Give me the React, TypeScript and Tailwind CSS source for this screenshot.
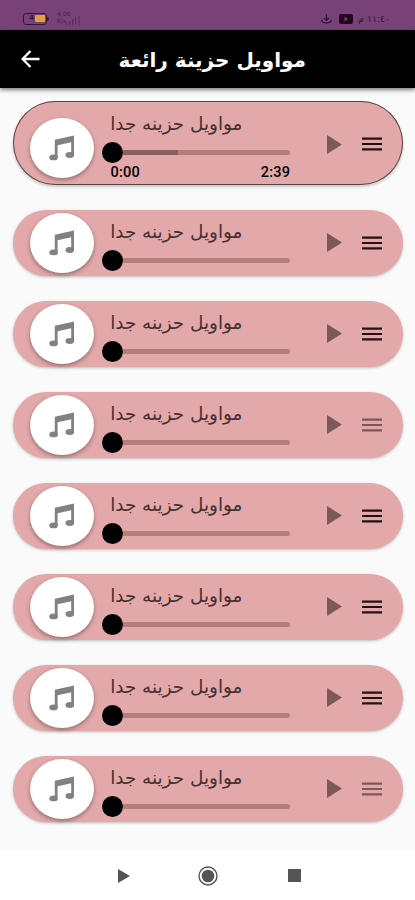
import { clsx } from 'clsx';

const tracks = [
  { id: 1, title: 'مواويل حزينه جدا', active: true, faded: false },
  { id: 2, title: 'مواويل حزينه جدا', active: false, faded: false },
  { id: 3, title: 'مواويل حزينه جدا', active: false, faded: false },
  { id: 4, title: 'مواويل حزينه جدا', active: false, faded: true },
  { id: 5, title: 'مواويل حزينه جدا', active: false, faded: false },
  { id: 6, title: 'مواويل حزينه جدا', active: false, faded: false },
  { id: 7, title: 'مواويل حزينه جدا', active: false, faded: false },
  { id: 8, title: 'مواويل حزينه جدا', active: false, faded: true },
];

type Track = (typeof tracks)[number];

function StatusBar() {
  return (
    <div className="flex h-[30px] items-center bg-[#774277] pl-[23px] pr-[25px] pt-[7px] text-[#35153b]">
      <div className="flex items-center">
        <div className="flex h-3 w-6 items-center justify-end rounded-[3px] border-[1.5px] border-[#35153b] pr-px">
          <span className="mr-px text-[7px] font-bold leading-none">4</span>
          <div className="h-[7px] w-[10px] rounded-[1px] bg-[#e3a03b]" />
        </div>
        <div className="h-1 w-0.5 rounded-r bg-[#35153b]" />
      </div>
      <div className="-mt-1 ml-2 flex flex-col opacity-80">
        <span className="text-[6px] leading-[7px]">4.00</span>
        <span className="text-[6px] leading-[7px]">K/s</span>
      </div>
      <svg className="-ml-1 mt-1 opacity-50" width="14" height="9" viewBox="0 0 14 9" fill="currentColor">
        <path d="M0 7h1.3v2H0zM3 5h1.3v4H3zM6 3h1.3v6H6zM9 1.5h1v7.5H9zM12.5 0h1v9h-1z" />
      </svg>
      <div className="ml-auto flex items-center">
        <svg width="11" height="10" viewBox="0 0 11 10" fill="none" stroke="currentColor" strokeWidth="1.3">
          <path d="M5.5 0v6M3.2 4l2.3 2.3L7.8 4M.7 6q.3 3 4.8 3t4.8-3" />
        </svg>
        <svg className="ml-[7px]" width="14" height="10" viewBox="0 0 14 10">
          <rect width="14" height="10" rx="2" fill="#25081f" />
          <path d="M5.5 2.8v4.4L9 5z" fill="#774277" />
        </svg>
        <span dir="rtl" className="ml-[5px] whitespace-nowrap text-[9.3px] leading-none">١١:٤٠ م</span>
      </div>
    </div>
  );
}

function AppBar() {
  return (
    <header className="relative flex h-[58px] items-center bg-black pl-[21px] text-white shadow-[0_2px_4px_rgba(0,0,0,0.5)]">
      <svg width="19" height="18" viewBox="0 0 19 18" fill="none" stroke="currentColor" strokeWidth="2.4">
        <path d="M18.5 9H2M9.5 1L1.6 9l7.9 8" />
      </svg>
      <h1 dir="rtl" className="ml-[79px] mt-0.5 w-[187px] whitespace-nowrap text-[20px] font-bold leading-none">
        مواويل حزينة رائعة
      </h1>
    </header>
  );
}

function MusicNote() {
  return (
    <svg width="26" height="26" viewBox="0 0 26 26" fill="#818181">
      <path d="M5.8 4.8L25 .6V20h-2.8V7.2L8.6 10.2V22.5H5.8z" />
      <ellipse cx="4.6" cy="22.4" rx="4.3" ry="2.9" />
      <ellipse cx="20.8" cy="20" rx="4.3" ry="2.9" />
    </svg>
  );
}

function Slider({ active }: { active: boolean }) {
  return (
    <div className="flex h-[21px] w-[188px] items-center">
      <div className="size-[21px] shrink-0 rounded-full bg-black" />
      {active && <div className="h-[5px] w-[55px] bg-[#895f60]" />}
      <div className="h-[5px] flex-1 rounded-r-full bg-[#b47e7f]" />
    </div>
  );
}

function TrackCard({ track }: { track: Track }) {
  const { title, active, faded } = track;

  return (
    <li
      className={clsx(
        'flex w-[390px] rounded-full bg-[#e3a8a9] pl-[17px]',
        active
          ? 'h-[84px] shadow-[inset_0_0_0_1px_#594447,0_2px_3px_rgba(0,0,0,0.2)]'
          : 'h-[66px] shadow-[0_1px_3px_rgba(0,0,0,0.25)]'
      )}
    >
      <div
        className={clsx(
          'flex h-[60px] w-16 shrink-0 items-center justify-center rounded-[50%] bg-white shadow-[0_2px_4px_rgba(0,0,0,0.35)]',
          active ? 'mt-[17px]' : 'mt-[2.5px]'
        )}
      >
        <MusicNote />
      </div>

      <div className={clsx('ml-[8.4px] flex w-[188px] flex-col', active ? 'pt-[11px]' : 'pt-[10px]')}>
        <p dir="rtl" className="ml-2 h-[30px] w-[132px] whitespace-nowrap text-[18.4px] leading-[24px] text-[#463032]">
          {title}
        </p>
        <Slider active={active} />
        {active && (
          <div className="ml-2 flex justify-between pt-[3px] font-['Roboto',sans-serif] text-[14.5px] font-medium leading-[14px] tracking-[0.3px] text-black">
            <span>0:00</span>
            <span>2:39</span>
          </div>
        )}
      </div>

      <div className={clsx('ml-[36.6px] flex h-5 items-center', active ? 'mt-[33px]' : 'mt-[22.5px]')}>
        <svg width="15" height="19" viewBox="0 0 15 19" fill="#7d5859">
          <path d="M0 0v19l15-9.5z" />
        </svg>
        <svg
          className={clsx('ml-5', faded ? 'text-[#7d5859]' : 'text-[#211315]')}
          width="20"
          height="14"
          viewBox="0 0 20 14"
          fill="currentColor"
        >
          <path d="M0 .5h20v2.2H0zM0 5.9h20v2.2H0zM0 11.3h20v2.2H0z" />
        </svg>
      </div>
    </li>
  );
}

function NavigationBar() {
  return (
    <nav className="flex h-[49px] items-center bg-white pl-[118px] text-[#555]">
      <svg width="12" height="14" viewBox="0 0 12 14" fill="currentColor">
        <path d="M0 0v14l12-7z" />
      </svg>
      <svg className="ml-[68px]" width="20" height="20" viewBox="0 0 20 20">
        <circle cx="10" cy="10" r="9" fill="none" stroke="currentColor" strokeWidth="1.4" />
        <circle cx="10" cy="10" r="6.3" fill="currentColor" />
      </svg>
      <div className="ml-[70px] size-[13px] bg-[#555]" />
    </nav>
  );
}

export default function App() {
  return (
    <div className="flex h-[900px] w-[415px] flex-col overflow-hidden bg-[#fafafa] font-['DejaVu_Sans',sans-serif]">
      <StatusBar />
      <AppBar />
      <ul className="flex flex-1 flex-col gap-[25px] pl-[13px] pt-[13px]">
        {tracks.map((track) => (
          <TrackCard key={track.id} track={track} />
        ))}
      </ul>
      <NavigationBar />
    </div>
  );
}
